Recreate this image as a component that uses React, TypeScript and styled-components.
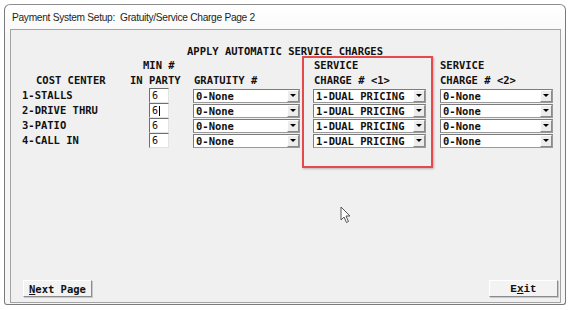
import styled, { createGlobalStyle } from "styled-components";

const GlobalStyle = createGlobalStyle`
  html, body {
    margin: 0;
    padding: 0;
    background: #ffffff;
  }
  body {
    width: 572px;
    height: 310px;
    overflow: hidden;
  }
`;

const Page = styled.div`
  position: relative;
  width: 572px;
  height: 310px;
  padding: 4px 0 0 4px;
  box-sizing: border-box;
`;

const Window = styled.div`
  width: 562px;
  height: 301px;
  box-sizing: border-box;
  border: 1px solid #7a7a7a;
  border-top-color: #8e8e8e;
  border-radius: 6px 6px 3px 3px;
  background: linear-gradient(#ffffff, #f6f6f6 40px);
  display: flex;
  flex-direction: column;
`;

const TitleBar = styled.div`
  height: 24px;
  display: flex;
  align-items: center;
  padding-left: 7px;
  font-family: "Liberation Sans", Arial, sans-serif;
  font-size: 10.2px;
  letter-spacing: -0.3px;
  color: #1e1e1e;
  white-space: pre;
`;

const Panel = styled.div`
  flex: 1;
  margin: 0 4px 1px 5px;
  border: 1px solid #a3a3a3;
  background: #f0f0f0;
  display: flex;
  flex-direction: column;
  padding: 13px 0 5px 11px;
  font-family: "DejaVu Sans Mono", "Liberation Mono", monospace;
  font-weight: bold;
  font-size: 10.5px;
  color: #111;
`;

const Grid = styled.div`
  display: grid;
  grid-template-columns: 108px 63px 120px 127px 113px;
  grid-auto-rows: 15px;
  align-items: center;
  white-space: pre;
`;

const Heading = styled.div`
  grid-column: 1 / -1;
  padding-left: 165px;
`;

const Cell = styled.div<{ $indent?: number }>`
  padding-left: ${(p) => p.$indent ?? 0}px;
  line-height: 15px;
`;

const PartyBox = styled.div`
  margin-left: 19px;
  width: 20px;
  height: 15px;
  box-sizing: border-box;
  background: #fff;
  border-top: 1px solid #6f6f6f;
  border-left: 1px solid #6f6f6f;
  border-right: 1px solid #e3e3e3;
  border-bottom: 1px solid #e3e3e3;
  padding-left: 2px;
  line-height: 13px;
  font-weight: normal;
  font-size: 10px;
  display: flex;
  align-items: center;
`;

const Caret = styled.span`
  display: inline-block;
  width: 1px;
  height: 10px;
  margin-left: 1px;
  background: #000;
`;

const Select = styled.div<{ $width: number }>`
  width: ${(p) => p.$width}px;
  height: 14px;
  box-sizing: border-box;
  background: #fff;
  border: 1px solid #9a9a9a;
  border-top-color: #7c7c7c;
  border-left-color: #7c7c7c;
  display: flex;
  align-items: center;
  padding-left: 2px;
`;

const SelectText = styled.span`
  flex: 1;
  line-height: 12px;
`;

const DropButton = styled.div`
  width: 12px;
  height: 12px;
  box-sizing: border-box;
  background: #ececec;
  border-left: 1px solid #fff;
  border-top: 1px solid #fff;
  border-right: 1px solid #8a8a8a;
  border-bottom: 1px solid #8a8a8a;
  display: flex;
  align-items: center;
  justify-content: center;

  &::after {
    content: "";
    border-left: 3px solid transparent;
    border-right: 3px solid transparent;
    border-top: 3px solid #000;
  }
`;

const ButtonRow = styled.div`
  margin-top: auto;
  display: flex;
  justify-content: space-between;
  padding-right: 2px;
`;

const Button = styled.button<{ $serif?: boolean }>`
  width: 69px;
  height: 17px;
  padding: 0;
  box-sizing: border-box;
  background: #f3f3f3;
  border-top: 1px solid #fff;
  border-left: 1px solid #fff;
  border-right: 1px solid #8c8c8c;
  border-bottom: 1px solid #8c8c8c;
  box-shadow: 1px 1px 0 #c8c8c8;
  font-family: ${(p) =>
    p.$serif ? `"Liberation Mono", "Courier New", monospace` : `"DejaVu Sans Mono", monospace`};
  font-weight: bold;
  font-size: ${(p) => (p.$serif ? 11 : 10.5)}px;
  color: #111;
  text-align: ${(p) => (p.$serif ? "center" : "left")};
  padding-left: ${(p) => (p.$serif ? 0 : 5)}px;
  white-space: pre;
  margin-left: ${(p) => (p.$serif ? 0 : 1)}px;

  u {
    text-decoration: underline;
    text-underline-offset: 1px;
  }
`;

const Highlight = styled.div`
  position: absolute;
  left: 302px;
  top: 56px;
  width: 131px;
  height: 112px;
  box-sizing: border-box;
  border: 2px solid #e5494b;
  box-shadow: 1px 1px 2px rgba(0, 0, 0, 0.25);
  pointer-events: none;
`;

const Cursor = styled.svg`
  position: absolute;
  left: 340px;
  top: 206px;
`;

const rows = [
  { name: "1-STALLS", party: "6" },
  { name: "2-DRIVE THRU", party: "6", caret: true },
  { name: "3-PATIO", party: "6" },
  { name: "4-CALL IN", party: "6" },
];

const App = () => {
  return (
    <Page>
      <GlobalStyle />
      <Window>
        <TitleBar>Payment System Setup:  Gratuity/Service Charge Page 2</TitleBar>
        <Panel>
          <Grid>
            <Heading>APPLY AUTOMATIC SERVICE CHARGES</Heading>

            <Cell />
            <Cell $indent={13}>MIN #</Cell>
            <Cell />
            <Cell $indent={1}>SERVICE</Cell>
            <Cell>SERVICE</Cell>

            <Cell $indent={14}>COST CENTER</Cell>
            <Cell>IN PARTY</Cell>
            <Cell $indent={1}>GRATUITY #</Cell>
            <Cell $indent={1}>CHARGE # {"<1>"}</Cell>
            <Cell>CHARGE # {"<2>"}</Cell>

            {rows.map((row, index) => (
              <Row key={index} {...row} />
            ))}
          </Grid>

          <ButtonRow>
            <Button>
              <u>N</u>ext Page
            </Button>
            <Button $serif>
              E<u>x</u>it
            </Button>
          </ButtonRow>
        </Panel>
      </Window>

      <Highlight />
      <Cursor width="12" height="18" viewBox="0 0 12 18">
        <path
          d="M1 1 L1 14 L4 11 L6.5 16.5 L8.5 15.5 L6 10 L10 10 Z"
          fill="#fff"
          stroke="#555"
          strokeWidth="1"
          strokeLinejoin="round"
        />
      </Cursor>
    </Page>
  );
};

const Row = ({ name, party, caret }: { name: string; party: string; caret?: boolean }) => {
  return (
    <>
      <Cell>{name}</Cell>
      <Cell>
        <PartyBox>
          {party}
          {caret && <Caret />}
        </PartyBox>
      </Cell>
      <Cell>
        <Select $width={107}>
          <SelectText>0-None</SelectText>
          <DropButton />
        </Select>
      </Cell>
      <Cell>
        <Select $width={113}>
          <SelectText>1-DUAL PRICING</SelectText>
          <DropButton />
        </Select>
      </Cell>
      <Cell>
        <Select $width={113}>
          <SelectText>0-None</SelectText>
          <DropButton />
        </Select>
      </Cell>
    </>
  );
};

export default App;
